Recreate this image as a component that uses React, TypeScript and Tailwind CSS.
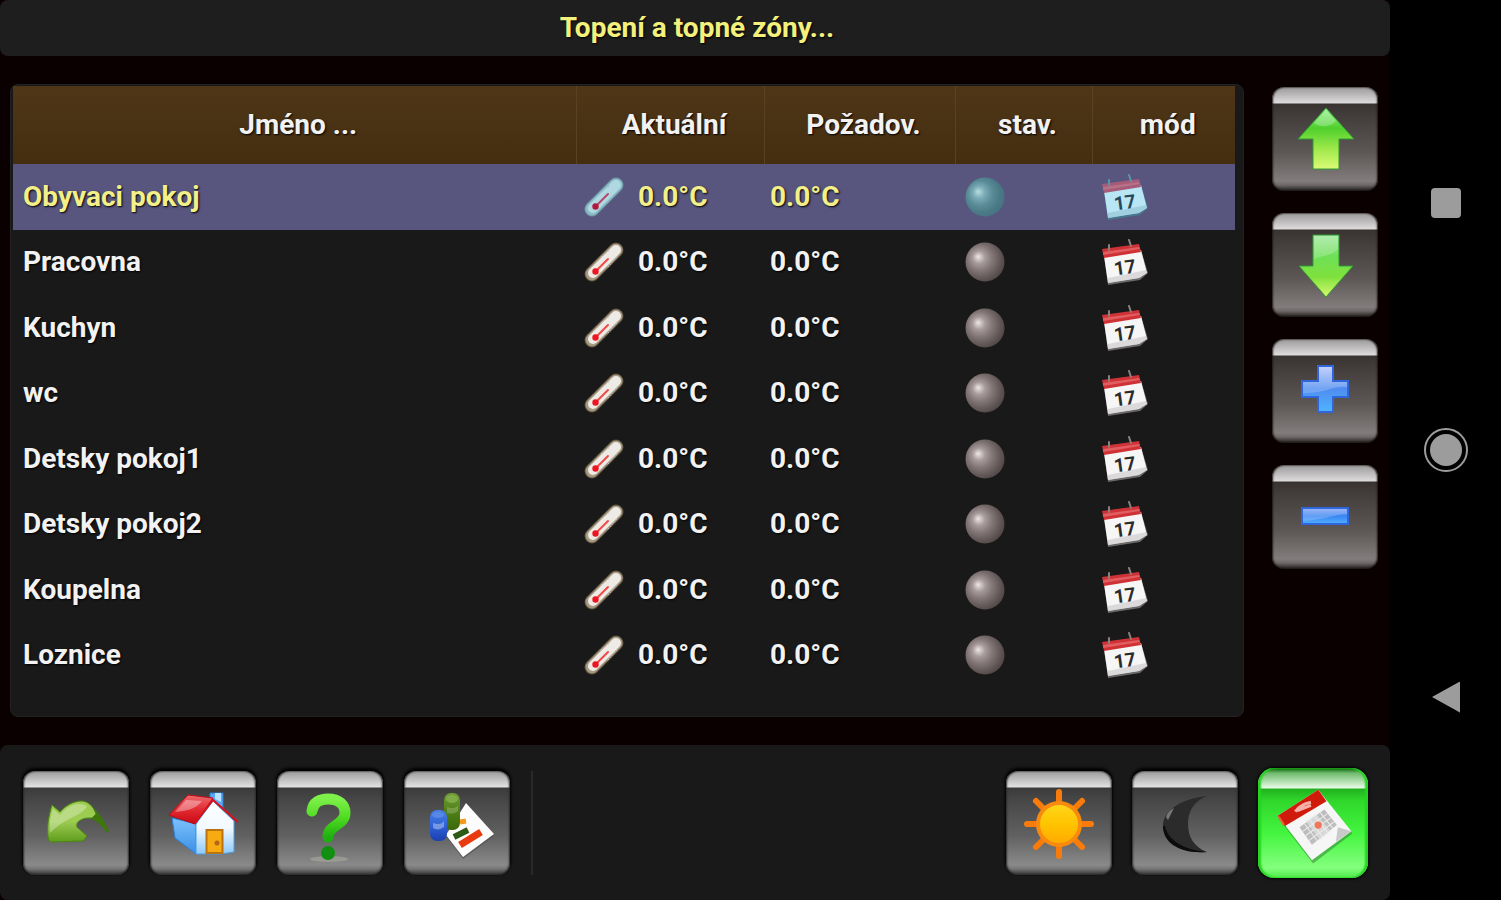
import React, { useState } from 'react';

interface Zone {
  id: number;
  name: string;
  current: number;
  target: number;
}

const initialZones: Zone[] = [
  'Obyvaci pokoj',
  'Pracovna',
  'Kuchyn',
  'wc',
  'Detsky pokoj1',
  'Detsky pokoj2',
  'Koupelna',
  'Loznice',
].map((name, id) => ({ id, name, current: 0, target: 0 }));

const formatTemp = (value: number) => `${value.toFixed(1)}°C`;

/* ---------- Table icons ---------- */

function Thermometer({ selected }: { selected: boolean }) {
  return (
    <svg viewBox="0 0 40 40" className="w-10 h-10 shrink-0" aria-hidden="true">
      <g strokeLinecap="round" fill="none">
        <path d="M8 32 32 8" stroke={selected ? '#6d97a6' : '#5f5341'} strokeWidth="15" />
        <path d="M8 32 32 8" stroke={selected ? '#8dbcc6' : '#a59a80'} strokeWidth="13" />
        <path d="M9 31 32 8" stroke={selected ? '#b0d8e2' : '#eeeae6'} strokeWidth="10" />
        <path d="M17 15 26 8M24 25 33 15" stroke={selected ? '#8fb9c8' : '#c3bfbb'} strokeWidth="1" strokeDasharray="1 2" />
        <path d="M11 30 24 17" stroke={selected ? '#b8466a' : '#f04a46'} strokeWidth="2" />
      </g>
      <circle cx="11.500" cy="29.500" r="3.200" fill={selected ? '#b5163c' : '#ee1520'} />
    </svg>
  );
}

function StatusBall({ selected }: { selected: boolean }) {
  return (
    <svg viewBox="0 0 40 40" className="w-10 h-10" aria-hidden="true">
      <circle cx="20" cy="20" r="19.500" fill={selected ? 'url(#ballSelected)' : 'url(#ball)'} />
    </svg>
  );
}

function CalendarDay({ selected }: { selected: boolean }) {
  return (
    <svg viewBox="0 0 46 46" className="w-[46px] h-[46px] text-shadow-none" aria-hidden="true">
      <path d="M2 17 39 11 46 34 38 41 6 46Z" fill={selected ? '#47788f' : '#6b6868'} />
      <path d="M2 17 39 11 45 34 37 39 6 44Z" fill={selected ? '#b9e6f5' : '#f6f6f6'} />
      <path d="M6 39 44 31 45 34 37 39 6 44Z" fill={selected ? '#8fc0d2' : '#c9c7c7'} opacity=".6" />
      <path d="M0 10 37 5 39 13 2 19Z" fill={selected ? '#a65c78' : '#cf3236'} />
      <path d="M1 13 37 8 38 10 1 16Z" fill={selected ? '#bd7a90' : '#ea6f70'} opacity=".7" />
      <path d="M7 11V6M29 7 27 1" stroke={selected ? '#5b96a8' : '#8a8080'} strokeWidth="2" strokeLinecap="round" />
      <text
        x="23"
        y="35"
        textAnchor="middle"
        transform="rotate(-8 23 29)"
        fontSize="19"
        fontWeight="700"
        fontFamily="Roboto, sans-serif"
        fill={selected ? '#254a5c' : '#2b2b2b'}
      >
        17
      </text>
    </svg>
  );
}

/* ---------- Button icons, drawn on the button's own 106 x 104 face ---------- */

function Face({ children }: { children: React.ReactNode }) {
  return (
    <svg viewBox="0 0 106 104" className="block w-full h-full" aria-hidden="true">
      {children}
    </svg>
  );
}

const ArrowUp = () => (
  <Face>
    <path d="M54 21 82 52H67V82H41V52H26Z" fill="url(#greenUp)" stroke="#2f9a35" strokeWidth="1" />
    <path d="M54 23 64 34C58 40 50 41 42 36Z" fill="#fff" opacity=".25" />
  </Face>
);

const ArrowDown = () => (
  <Face>
    <path d="M41 22H67V53H81L54 84 27 53H41Z" fill="url(#greenDown)" stroke="#2f9a35" strokeWidth="1" />
    <path d="M42 23H66V36C58 44 50 42 42 46Z" fill="#fff" opacity=".2" />
  </Face>
);

const Plus = () => (
  <Face>
    <path d="M46 27H61V42H76V58H61V73H46V58H30V42H46Z" fill="url(#bluePlus)" stroke="#2f66dc" strokeWidth="2" />
    <path d="M47 28H60V43H75V48C60 46 58 54 31 54V43H47Z" fill="#fff" opacity=".2" />
  </Face>
);

const Minus = () => (
  <Face>
    <path d="M30 43H76V59H30Z" fill="url(#blueMinus)" stroke="#2f66dc" strokeWidth="2" />
    <path d="M31 44H75V49C62 49 58 54 31 56Z" fill="#fff" opacity=".2" />
  </Face>
);

const BackArrow = () => (
  <Face>
    <path d="M66 34C75 39 82 50 86 60L84 62C79 55 75 50 66 47Z" fill="#3f760c" />
    <path
      d="M29 34 37 41C42 35 50 30 59 30 66 31 70 35 73 43L69 47C65 47 62 47 60 48 55 50 53 52 54 56L64 65 60 70 27 71C23 66 24 50 29 34Z"
      fill="url(#backGreen)"
      stroke="#4c8512"
      strokeWidth="1"
    />
    <path d="M27 62C26 52 28 44 30 38L37 44C44 35 54 30 64 35 60 45 42 46 27 62Z" fill="#fff" opacity=".3" />
  </Face>
);

const House = () => (
  <Face>
    <path d="M60 22H73V38L60 30Z" fill="#58aaf2" stroke="#2e7dd0" strokeWidth="1" />
    <path d="M65 22H71V31L65 28Z" fill="#b8e2ff" />
    <path d="M22 47 46 53V83L25 67Z" fill="url(#wallSide)" stroke="#2d7fd3" strokeWidth="1" />
    <path d="M46 53 63 30 84 50V81L71 83H46Z" fill="url(#wallFront)" stroke="#4b9ee6" strokeWidth="1" />
    <path d="M19 44 38 24 63 27 45 53Z" fill="url(#roof)" stroke="#c20b16" strokeWidth="1" />
    <path d="M45 52 63 29 88 51" fill="none" stroke="#d8121d" strokeWidth="2" />
    <path d="M36 29 52 30C46 38 36 40 25 41Z" fill="#fff" opacity=".35" />
    <rect x="56.500" y="59" width="16" height="23" fill="#f8aa12" stroke="#bb7310" strokeWidth="2" />
    <circle cx="67" cy="72" r="2.500" fill="#b36618" />
  </Face>
);

const QuestionMark = () => (
  <Face>
    <ellipse cx="52" cy="88" rx="19" ry="3" fill="#bcbcac" opacity=".4" />
    <path
      d="M35 40C36 31 43 28 51 28 62 28 68 34 68 42 68 54 51 54 51 66"
      fill="none"
      stroke="url(#question)"
      strokeWidth="11"
      strokeLinecap="round"
    />
    <circle cx="51" cy="82" r="7" fill="#108f10" />
  </Face>
);

const Report = () => (
  <Face>
    <path d="M62 33 90 65 59 88 42 65Z" fill="#4d4d4d" opacity=".6" />
    <path d="M62 32 90 63 59 86 42 64Z" fill="#fdfdfd" />
    <path d="M56 51 62 50" stroke="#f39a1c" strokeWidth="5" />
    <path d="M50 66 64 59" stroke="#2f5a16" strokeWidth="6" />
    <path d="M56 74 77 61" stroke="#e93a10" strokeWidth="7" />
    <rect x="40" y="22" width="16" height="37" rx="7" fill="url(#capsuleGreen)" />
    <ellipse cx="48" cy="28" rx="6" ry="4" fill="#86b04f" opacity=".8" />
    <path d="M43 36C48 38 51 37 54 35V40C50 43 46 43 43 42Z" fill="#fff" opacity=".2" />
    <rect x="26" y="39" width="17" height="31" rx="7" fill="url(#capsuleBlue)" />
    <ellipse cx="34" cy="44" rx="6" ry="3" fill="#5c8de8" opacity=".8" />
    <path d="M29 52C35 54 38 53 40 50V56C36 59 32 59 29 57Z" fill="#fff" opacity=".35" />
  </Face>
);

const Sun = () => (
  <Face>
    <g stroke="#f97c0b" strokeWidth="6" strokeLinecap="round">
      <path d="M53 21V32M53 74V85M21 53H32M74 53H85" />
      <path d="M30 30 38 38M68 68 76 76M76 30 68 38M38 68 30 76" />
    </g>
    <circle cx="53" cy="53" r="21" fill="url(#sun)" stroke="#f98a10" strokeWidth="4" />
  </Face>
);

const Moon = () => (
  <Face>
    <path d="M75 25C46 28 31 41 31 55 31 72 52 83 75 81 62 76 56 66 56 53 56 40 62 30 75 25Z" fill="#2b2b2b" />
    <path d="M33 55C36 69 50 78 74 81 48 83 31 72 31 55Z" fill="#0c0c0c" />
    <path d="M34 46C35 42 38 39 42 37L36 49Z" fill="#777" />
  </Face>
);

const CalendarSheet = () => (
  <Face>
    <path d="M58 22 91 62 53 91 20 48Z" fill="#2c7a2c" opacity=".5" />
    <path d="M58 20 90 60 52 88 19 45Z" fill="#f6f6f6" />
    <path d="M19 45 58 20 66 31 26 55Z" fill="#cf1a0c" />
    <path d="M20 46 25 54" stroke="#f0643c" strokeWidth="2" />
    <path d="M36 41C40 35 46 33 51 32M38 40 51 35" fill="none" stroke="#f5b0a8" strokeWidth="3" />
    <path d="M40 56 64 39 76 54 52 73Z" fill="#bdbdbd" />
    <g stroke="#ececec" strokeWidth="1">
      <path d="M43 60 67 43M46 64 70 47M49 69 73 51" />
      <path d="M45 53 57 69M50 49 62 65M55 46 67 61M60 42 72 57" />
    </g>
    <path d="M46 50 56 43 70 60 60 69Z" fill="#e9e9e9" opacity=".6" />
    <circle cx="58" cy="54" r="3.500" fill="#f2765c" />
    <path d="M90 60 77 56 75 70Z" fill="#c9c9c9" />
  </Face>
);

/* Gradients shared by every icon on the page */
function Gradients() {
  const stops: Record<string, string[]> = {
    greenUp: ['#8ff08a', '#4fd02c', '#9ee84a', '#dcfb75'],
    greenDown: ['#9fe79b', '#6fe05a', '#7ee03c', '#d8f970'],
    bluePlus: ['#b9c6fb', '#4f8df0', '#4fb4ff'],
    blueMinus: ['#86a4f6', '#3a86f2', '#4fb0ff'],
    backGreen: ['#9ccb50', '#9ccc52', '#5f9c1c'],
    wallSide: ['#7fc1fa', '#5aa9f2', '#3c8de6'],
    wallFront: ['#ffffff', '#f2faff', '#8fcaf8'],
    roof: ['#ee6a6f', '#e22b33', '#c90812'],
    question: ['#7df04a', '#4fdb20', '#1faf10'],
    capsuleGreen: ['#6f9c35', '#4f8017', '#3b680c'],
    capsuleBlue: ['#4d7fe6', '#2e62d6', '#1c3fae'],
    sun: ['#ffd61c', '#ffc400', '#ffa800'],
  };
  const balls: Record<string, string[]> = {
    ball: ['#eee6e6', '#a89b9b', '#827676', '#655a5a', '#4a4040'],
    ballSelected: ['#b4dde0', '#7aaab4', '#5a8c98', '#4a7a86', '#47707f'],
  };
  return (
    <svg className="absolute w-0 h-0" aria-hidden="true">
      <defs>
        {Object.entries(stops).map(([id, colors]) => (
          <linearGradient key={id} id={id} x1="0" y1="0" x2="0" y2="1">
            {colors.map((c, i) => (
              <stop key={i} offset={i / (colors.length - 1)} stopColor={c} />
            ))}
          </linearGradient>
        ))}
        {Object.entries(balls).map(([id, colors]) => (
          <radialGradient key={id} id={id} cx=".42" cy=".45" r=".64" fx=".32" fy=".36">
            {colors.map((c, i) => (
              <stop key={i} offset={i / (colors.length - 1)} stopColor={c} />
            ))}
          </radialGradient>
        ))}
      </defs>
    </svg>
  );
}

/* ---------- Controls ---------- */

type Tone = 'warm' | 'gray' | 'active';

const tones: Record<Tone, string> = {
  warm: 'w-[106px] h-[104px] rounded-xl bg-[linear-gradient(#9a9898_0px,#dddbdb_16px,#383231_17px,#423c3b_28px,#5c5655_65px,#827d7c_94px,#6e6968_98px,#1f1b1b_104px)] shadow-[inset_1px_0_2px_#1d1919,inset_-1px_0_2px_#1d1919]',
  gray: 'w-[106px] h-[104px] rounded-xl bg-[linear-gradient(#9a9a9a_0px,#e2e2e2_16px,#3b3b3b_17px,#464646_28px,#616161_65px,#8a8a8a_94px,#757575_98px,#303030_104px)] shadow-[inset_1px_0_2px_#2a2a2a,inset_-1px_0_2px_#2a2a2a,0_-2px_3px_1px_#000]',
  active: 'w-[110px] h-[110px] rounded-2xl bg-[linear-gradient(#035c03_0px,#6fba6c_5px,#e8fbe6_20px,#22b01e_21px,#2fd62b_32px,#43f53f_65px,#84ff7e_100px,#4be847_110px)] shadow-[inset_3px_0_2px_#25d321,inset_-3px_0_2px_#25d321,0_0_3px_1px_#000]',
};

function PanelButton({ label, tone, onClick, children }: {
  label: string;
  tone: Tone;
  onClick?: () => void;
  children: React.ReactNode;
}) {
  return (
    <button type="button" aria-label={label} onClick={onClick} className={`shrink-0 ${tones[tone]}`}>
      {children}
    </button>
  );
}

export default function App() {
  const [zones, setZones] = useState<Zone[]>(initialZones);
  const [selected, setSelected] = useState(0);

  const move = (step: number) =>
    setSelected(s => Math.min(zones.length - 1, Math.max(0, s + step)));

  const adjust = (delta: number) =>
    setZones(list => list.map((z, i) => (i === selected ? { ...z, target: z.target + delta } : z)));

  return (
    <div className="flex min-h-screen bg-black font-[Roboto,sans-serif] font-bold text-[28px] leading-8 text-[#f2f2f2] text-shadow-[1px_1px_2px_#000]">
      <Gradients />

      <div className="flex-1 min-w-0 flex flex-col bg-[#0b0000]">
        {/* Title bar */}
        <header className="h-14 flex items-center justify-center rounded-lg bg-[#1e1e1e] pl-1">
          <h1 className="text-[#f3f07c]">Topení a topné zóny...</h1>
        </header>

        {/* Zones */}
        <main className="flex-1 flex gap-7 pt-7 pb-7 pl-2.5 pr-3">
          <section className="flex-1 min-w-0 rounded-lg bg-[#191919] border border-[#222] pt-px pl-0.5 pr-2">
            <table className="w-full h-[602px] table-fixed border-collapse">
              <colgroup>
                <col />
                <col className="w-[188px]" />
                <col className="w-[191px]" />
                <col className="w-[137px]" />
                <col className="w-[143px]" />
              </colgroup>
              <thead>
                <tr className="h-[78px] bg-linear-to-b from-[#4e3617] to-[#452d10]">
                  <th className="pl-2">Jméno ...</th>
                  <th className="pl-2 border-l border-[#5a4221]">Aktuální</th>
                  <th className="pl-2 border-l border-[#5a4221]">Požadov.</th>
                  <th className="pl-2 border-l border-[#5a4221]">stav.</th>
                  <th className="pl-2 border-l border-[#5a4221]">mód</th>
                </tr>
              </thead>
              <tbody>
                {zones.map((zone, i) => {
                  const active = i === selected;
                  return (
                    <tr
                      key={zone.id}
                      onClick={() => setSelected(i)}
                      className={active ? 'bg-[#58567f] text-[#f3f08a]' : ''}
                    >
                      <td className="pl-2.5">{zone.name}</td>
                      <td className="pl-2">
                        <div className="flex items-center gap-3.5">
                          <Thermometer selected={active} />
                          {formatTemp(zone.current)}
                        </div>
                      </td>
                      <td className="pl-1.5">{formatTemp(zone.target)}</td>
                      <td className="pl-2.5"><StatusBall selected={active} /></td>
                      <td className="pl-2.5"><CalendarDay selected={active} /></td>
                    </tr>
                  );
                })}
              </tbody>
            </table>
          </section>

          <div className="flex flex-col gap-[22px] pt-[3px]">
            <PanelButton label="Nahoru" tone="warm" onClick={() => move(-1)}><ArrowUp /></PanelButton>
            <PanelButton label="Dolů" tone="warm" onClick={() => move(1)}><ArrowDown /></PanelButton>
            <PanelButton label="Přidat" tone="warm" onClick={() => adjust(0.5)}><Plus /></PanelButton>
            <PanelButton label="Ubrat" tone="warm" onClick={() => adjust(-0.5)}><Minus /></PanelButton>
          </div>
        </main>

        {/* Toolbar */}
        <footer className="h-[155px] flex items-center justify-between rounded-lg bg-[#191919] pl-[23px] pr-[22px]">
          <div className="flex items-center gap-[21px]">
            <PanelButton label="Zpět" tone="gray"><BackArrow /></PanelButton>
            <PanelButton label="Domů" tone="gray"><House /></PanelButton>
            <PanelButton label="Nápověda" tone="gray"><QuestionMark /></PanelButton>
            <PanelButton label="Přehled" tone="gray"><Report /></PanelButton>
            <div className="w-0.5 h-[104px] bg-[#292929]"></div>
          </div>
          <div className="flex items-center gap-5">
            <PanelButton label="Den" tone="gray"><Sun /></PanelButton>
            <PanelButton label="Noc" tone="gray"><Moon /></PanelButton>
            <PanelButton label="Kalendář" tone="active"><CalendarSheet /></PanelButton>
          </div>
        </footer>
      </div>

      {/* System navigation */}
      <nav className="w-[111px] shrink-0 flex flex-col items-center justify-between py-[181px]">
        <button type="button" aria-label="Poslední aplikace" className="w-11 h-11 grid place-items-center">
          <span className="w-[30px] h-[30px] rounded-sm bg-[#9c9c9c]"></span>
        </button>
        <button type="button" aria-label="Plocha" className="w-11 h-11 grid place-items-center rounded-full border-2 border-[#9c9c9c]">
          <span className="w-8 h-8 rounded-full bg-[#9c9c9c]"></span>
        </button>
        <button type="button" aria-label="Zpět v systému" className="w-11 h-11">
          <svg viewBox="0 0 44 44" className="w-11 h-11" aria-hidden="true">
            <path d="M8 22 35 7Q36 6 36 8V37Q36 38 35 37Z" fill="#9c9c9c" />
          </svg>
        </button>
      </nav>
    </div>
  );
}
